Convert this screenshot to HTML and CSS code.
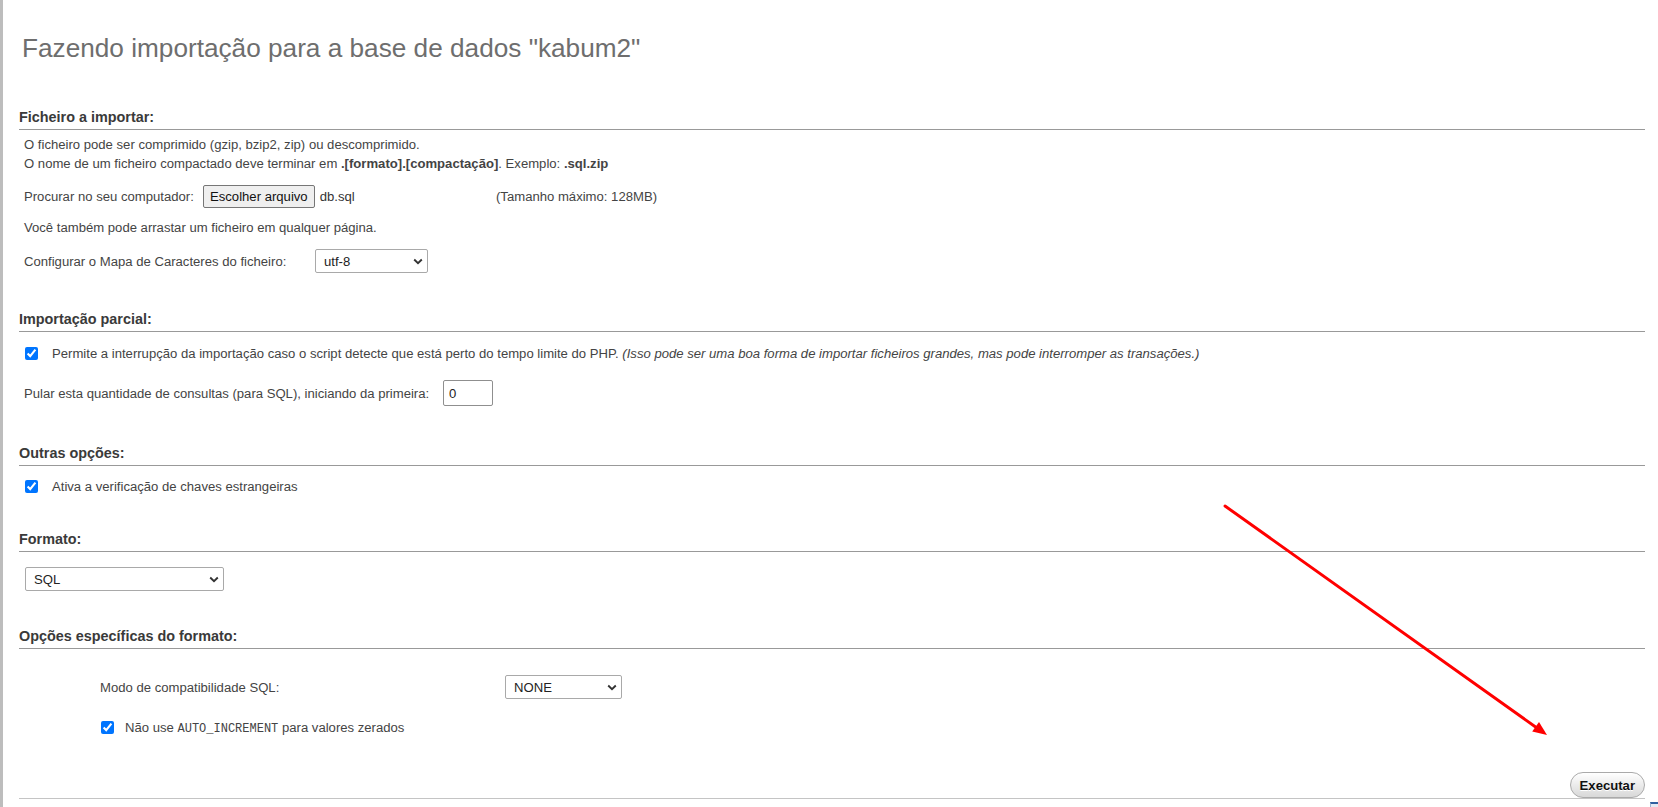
FILE: index.html
```html
<!DOCTYPE html>
<html lang="pt">
<head>
<meta charset="utf-8">
<title>Importar</title>
<link rel="stylesheet" href="styles.css">
</head>
<body>
<div class="page">
  <h2 class="title">Fazendo importação para a base de dados "kabum2"</h2>

  <section class="opts sec-file">
    <h3>Ficheiro a importar:</h3>
    <p class="note">O ficheiro pode ser comprimido (gzip, bzip2, zip) ou descomprimido.<br>O nome de um ficheiro compactado deve terminar em <b>.[formato].[compactação]</b>. Exemplo: <b>.sql.zip</b></p>
    <div class="row row-file">
      <span class="lbl">Procurar no seu computador:</span>
      <span class="file"><button type="button" class="btn-file">Escolher arquivo</button><span class="fname">db.sql</span></span>
      <span class="maxsize">(Tamanho máximo: 128MB)</span>
    </div>
    <p class="line drag">Você também pode arrastar um ficheiro em qualquer página.</p>
    <div class="row row-charset">
      <span class="lbl">Configurar o Mapa de Caracteres do ficheiro:</span>
      <select class="sel sel-charset"><option>utf-8</option></select>
    </div>
  </section>

  <section class="opts sec-partial">
    <h3>Importação parcial:</h3>
    <label class="check check-a"><input type="checkbox" checked><span>Permite a interrupção da importação caso o script detecte que está perto do tempo limite do PHP. <i>(Isso pode ser uma boa forma de importar ficheiros grandes, mas pode interromper as transações.)</i></span></label>
    <div class="row row-skip">
      <span class="lbl">Pular esta quantidade de consultas (para SQL), iniciando da primeira:</span>
      <input type="text" class="num" value="0">
    </div>
  </section>

  <section class="opts sec-other">
    <h3>Outras opções:</h3>
    <label class="check check-a"><input type="checkbox" checked><span>Ativa a verificação de chaves estrangeiras</span></label>
  </section>

  <section class="opts sec-format">
    <h3>Formato:</h3>
    <select class="sel sel-format"><option>SQL</option></select>
  </section>

  <section class="opts sec-specific">
    <h3>Opções específicas do formato:</h3>
    <div class="compat">
      <span class="lbl">Modo de compatibilidade SQL:</span>
      <select class="sel sel-compat"><option>NONE</option></select>
    </div>
    <label class="check check-b"><input type="checkbox" checked><span>Não use <code>AUTO_INCREMENT</code> para valores zerados</span></label>
  </section>

  <div class="actions">
    <button type="button" class="btn-go">Executar</button>
  </div>

  <svg class="arrow" width="1658" height="807" viewBox="0 0 1658 807" aria-hidden="true">
    <line x1="1225" y1="506" x2="1537" y2="728" stroke="#ff0000" stroke-width="3" stroke-linecap="round"/>
    <polygon points="1547,735 1532.2,731.5 1539,721.9" fill="#ff0000"/>
  </svg>
  <span class="corner"></span>
</div>
</body>
</html>
```

FILE: styles.css
```css
* { box-sizing: border-box; }
html, body { margin: 0; padding: 0; }
body {
  font-family: "Liberation Sans", Arial, sans-serif;
  font-size: 13.12px;
  color: #444;
  background: #fff;
  overflow: hidden;
}
.page {
  position: relative;
  min-height: 807px;
  height: 807px;
  border-left: 3px solid #bdbdbd;
  padding: 0 13px 0 16px;
}
.title {
  margin: 0;
  padding: 33px 0 0 3px;
  font-size: 26.2px;
  line-height: 30px;
  font-weight: normal;
  color: #6e6e6e;
}
.opts h3 {
  margin: 0;
  font-size: 14.4px;
  line-height: 18px;
  font-weight: bold;
  color: #3a3a3a;
  padding-bottom: 3px;
  border-bottom: 1px solid #999;
}
.sec-file { margin-top: 45px; }
.sec-partial { margin-top: 37px; }
.sec-other { margin-top: 38px; }
.sec-format { margin-top: 34px; }
.sec-specific { margin-top: 36px; }

.note, .line {
  margin: 5px 0 0 5px;
  line-height: 19px;
}
.drag { margin-top: 10px; }
.row {
  display: flex;
  align-items: center;
  margin-left: 5px;
}
.row-file { margin-top: 12px; height: 23px; }
.row-file .lbl { width: 179px; flex: none; }
.file { display: flex; align-items: center; width: 293px; flex: none; }
.btn-file {
  height: 23px;
  padding: 0 6px;
  font-family: inherit;
  font-size: 13.12px;
  color: #111;
  background: #efefef;
  border: 1px solid #767676;
  border-radius: 2px;
}
.fname { margin-left: 5px; color: #333; }

.row-charset { margin-top: 12px; height: 24px; }
.row-charset .lbl { width: 291px; flex: none; }

.sel {
  appearance: none;
  -webkit-appearance: none;
  height: 24px;
  padding: 0 20px 0 8px;
  font-family: inherit;
  font-size: 13.12px;
  color: #222;
  background: #fff url("data:image/svg+xml;utf8,<svg xmlns='http://www.w3.org/2000/svg' width='10' height='7' viewBox='0 0 10 7'><path d='M1.2 1.5 L5 5.2 L8.8 1.5' fill='none' stroke='%23333' stroke-width='1.9'/></svg>") no-repeat right 4px center;
  border: 1px solid #a9a9a9;
  border-radius: 2px;
}
.sel-charset { width: 113px; }
.sel-format { width: 199px; margin: 15px 0 0 6px; display: block; }
.sel-compat { width: 117px; }

.check {
  display: flex;
  align-items: center;
  line-height: 19px;
  height: 19px;
}
.check input {
  margin: 0;
  width: 13px;
  height: 13px;
  flex: none;
  accent-color: #0075ff;
}
.check-a { margin: 12px 0 0 6px; }
.check-a input { margin-right: 14px; }
.sec-other .check-a { margin-top: 11px; }
.check-b { margin: 19px 0 0 82px; }
.check-b input { margin-right: 11px; }
.check i { font-style: italic; }
code {
  font-family: "Liberation Mono", "DejaVu Sans Mono", monospace;
  font-size: 12px;
  line-height: 1;
}

.row-skip { margin-top: 17px; height: 26px; }
.row-skip .lbl { width: 419px; flex: none; }
.num {
  width: 50px;
  height: 26px;
  padding: 1px 5px;
  font-family: inherit;
  font-size: 13.12px;
  color: #222;
  border: 1px solid #8f8f8f;
  border-radius: 2px;
}

.compat {
  display: grid;
  grid-template-columns: 405px auto;
  align-items: center;
  margin: 26px 0 0 81px;
  height: 24px;
}

.actions {
  display: flex;
  justify-content: flex-end;
  margin-top: 35px;
  border-bottom: 1px solid #c4c4c4;
}
.btn-go {
  height: 26px;
  padding: 0 9px;
  font-family: inherit;
  font-size: 13.12px;
  font-weight: bold;
  color: #111;
  text-shadow: 0 1px 0 #fff;
  background: linear-gradient(#ffffff, #d8d8d8);
  border: 1px solid #aaa;
  border-radius: 13px;
}

.arrow {
  position: absolute;
  left: -3px;
  top: 0;
  pointer-events: none;
}
.corner {
  position: absolute;
  left: 1647px;
  top: 802px;
  width: 8px;
  height: 5px;
  border-top: 2px solid #2f5f9f;
  border-left: 1px solid #9db3d0;
  background: #e4ebf4;
}
```
